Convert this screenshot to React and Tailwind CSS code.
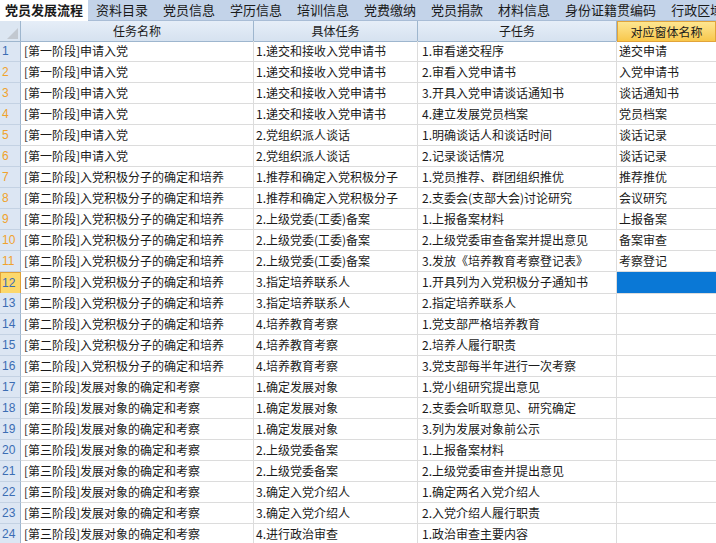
import React from "react";

const tabs = ["资料目录", "党员信息", "学历信息", "培训信息", "党费缴纳", "党员捐款", "材料信息", "身份证籍贯编码", "行政区域"];

const S1 = "[第一阶段]申请入党";
const S2 = "[第二阶段]入党积极分子的确定和培养";
const S3 = "[第三阶段]发展对象的确定和考察";

const rows = [
  [S1, "1.递交和接收入党申请书", "1.审看递交程序", "递交申请"],
  [S1, "1.递交和接收入党申请书", "2.审看入党申请书", "入党申请书"],
  [S1, "1.递交和接收入党申请书", "3.开具入党申请谈话通知书", "谈话通知书"],
  [S1, "1.递交和接收入党申请书", "4.建立发展党员档案", "党员档案"],
  [S1, "2.党组织派人谈话", "1.明确谈话人和谈话时间", "谈话记录"],
  [S1, "2.党组织派人谈话", "2.记录谈话情况", "谈话记录"],
  [S2, "1.推荐和确定入党积极分子", "1.党员推荐、群团组织推优", "推荐推优"],
  [S2, "1.推荐和确定入党积极分子", "2.支委会(支部大会)讨论研究", "会议研究"],
  [S2, "2.上级党委(工委)备案", "1.上报备案材料", "上报备案"],
  [S2, "2.上级党委(工委)备案", "2.上级党委审查备案并提出意见", "备案审查"],
  [S2, "2.上级党委(工委)备案", "3.发放《培养教育考察登记表》", "考察登记"],
  [S2, "3.指定培养联系人", "1.开具列为入党积极分子通知书", ""],
  [S2, "3.指定培养联系人", "2.指定培养联系人", ""],
  [S2, "4.培养教育考察", "1.党支部严格培养教育", ""],
  [S2, "4.培养教育考察", "2.培养人履行职责", ""],
  [S2, "4.培养教育考察", "3.党支部每半年进行一次考察", ""],
  [S3, "1.确定发展对象", "1.党小组研究提出意见", ""],
  [S3, "1.确定发展对象", "2.支委会听取意见、研究确定", ""],
  [S3, "1.确定发展对象", "3.列为发展对象前公示", ""],
  [S3, "2.上级党委备案", "1.上报备案材料", ""],
  [S3, "2.上级党委备案", "2.上级党委审查并提出意见", ""],
  [S3, "3.确定入党介绍人", "1.确定两名入党介绍人", ""],
  [S3, "3.确定入党介绍人", "2.入党介绍人履行职责", ""],
  [S3, "4.进行政治审查", "1.政治审查主要内容", ""],
];

const font = { fontFamily: '"Noto Sans CJK SC", "Noto Sans", sans-serif' };

export default function App() {
  return (
    <div
      className="w-[716px] h-[543px] overflow-hidden bg-white text-[#1a1a1a] font-['Noto_Sans_CJK_SC',sans-serif]"
    >
      {/* Tab bar */}
      <div className="flex h-[21px] bg-[#c3d3e9] border-b border-[#a9bdd6] whitespace-nowrap">
        <div className="h-[21px] px-[5px] bg-white font-bold text-[13px] leading-[20px] w-[88px] shrink-0">
          党员发展流程
        </div>
        <div className="flex gap-px ml-[1px]">
          {tabs.map((t) => (
            <div key={t} className="px-[7px] text-[13px] leading-[20px] shrink-0">
              {t}
            </div>
          ))}
        </div>
      </div>

      {/* Header */}
      <div className="grid grid-cols-[21px_233px_164px_199px_1fr] h-[20px] text-[12px] leading-[19px] whitespace-nowrap">
        <div className="relative bg-[#dce6f2] border-r border-b border-[#9eb6ce]">
          <svg className="absolute right-[2px] bottom-[2px]" width="11" height="11" viewBox="0 0 11 11">
            <polygon points="11,0 11,11 0,11" fill="#c2c8d0" />
          </svg>
        </div>
        <div className="bg-gradient-to-b from-[#e6eef8] to-[#d6e2f0] border-r border-b border-[#9eb6ce] text-center">任务名称</div>
        <div className="bg-gradient-to-b from-[#e6eef8] to-[#d6e2f0] border-r border-b border-[#9eb6ce] text-center">具体任务</div>
        <div className="bg-gradient-to-b from-[#e6eef8] to-[#d6e2f0] border-r border-b border-[#9eb6ce] text-center">子任务</div>
        <div className="bg-gradient-to-b from-[#fde690] to-[#f8c74a] border border-[#e2a43a] text-center">对应窗体名称</div>
      </div>

      {/* Body */}
      {rows.map((r, i) => {
        const n = i + 1;
        const selected = n === 12;
        const orange = n >= 2 && n <= 11;
        return (
          <div
            key={i}
            className="grid grid-cols-[21px_233px_164px_199px_1fr] h-[21px] text-[12px] leading-[20px] whitespace-nowrap"
          >
            <div
              className={
                selected
                  ? "bg-[#fcd86c] border border-[#e0a238] pl-[1px] text-[#3b6db3] font-['Liberation_Sans',sans-serif] text-[12px]"
                  : "bg-[#dce6f3] border-r border-[#9eb6ce] border-b border-b-[#c4d2e3] pl-[2px] font-['Liberation_Sans',sans-serif] text-[12px] " +
                    (orange ? "text-[#f0a22c]" : "text-[#3b6db3]")
              }
            >
              {n}
            </div>
            <div className="border-r border-b border-[#dcdcdc] pl-[3px] overflow-hidden">{r[0]}</div>
            <div className="border-r border-b border-[#dcdcdc] pl-[2px] overflow-hidden">{r[1]}</div>
            <div className="border-r border-b border-[#dcdcdc] pl-[4px] overflow-hidden">{r[2]}</div>
            <div
              className={
                selected
                  ? "bg-[#0a78d6] border-b border-[#dcdcdc]"
                  : "border-b border-[#dcdcdc] pl-[2px] overflow-hidden"
              }
            >
              {r[3]}
            </div>
          </div>
        );
      })}
    </div>
  );
}
